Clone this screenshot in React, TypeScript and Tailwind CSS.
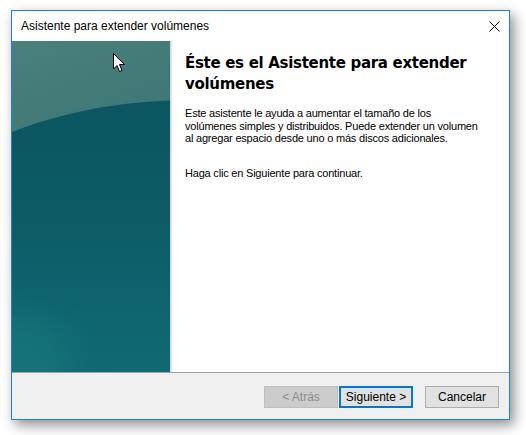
const ui = { fontFamily: '"Liberation Sans", Arial, sans-serif' };
const title = { fontFamily: '"DejaVu Sans", Verdana, sans-serif' };

function Cursor() {
  return (
    <svg
      className="absolute left-[101px] top-[12px]"
      width="13"
      height="20"
      viewBox="0 0 13 20"
    >
      <path
        d="M0.5 0.5 L0.5 16 L4 12.5 L6.5 18.5 L9 17.5 L6.5 11.5 L11.5 11.5 Z"
        fill="#fff"
        stroke="#000"
        strokeWidth="1"
        strokeLinejoin="miter"
      />
    </svg>
  );
}

function SidePanel() {
  return (
    <div className="relative w-[158px] shrink-0 overflow-hidden bg-[linear-gradient(160deg,#4a807d_0%,#3b7574_40%,#2c686e_75%,#286570_100%)]">
      {/* darker lower body, its top edge is a wide arc */}
      <div className="absolute -left-[120px] top-[59px] h-[320px] w-[600px] rounded-[50%] bg-[linear-gradient(180deg,#0b5660_0%,#0c5b65_35%,#0f6671_70%,#106b76_100%)]" />
      <div className="absolute -left-[50px] bottom-[-50px] h-[110px] w-[110px] rounded-full bg-[#1a7d7e] opacity-50 blur-[16px]" />
      <Cursor />
    </div>
  );
}

function Button({
  children,
  disabled,
  primary,
}: {
  children: React.ReactNode;
  disabled?: boolean;
  primary?: boolean;
}) {
  let cls = "border border-[#adadad] bg-[#e1e1e1] text-black";
  if (disabled) cls = "border border-[#bfbfbf] bg-[#cccccc] text-[#8d8d8d]";
  if (primary) cls = "border-2 border-[#0078d7] bg-[#e1e1e1] text-black";
  return (
    <div
      className={`flex h-[22px] w-[74px] items-center justify-center text-[12px] ${cls}`}
      style={ui}
    >
      {children}
    </div>
  );
}

export default function App() {
  return (
    <div className="h-[435px] w-[526px] overflow-hidden bg-white pl-[11px] pt-[10px]">
      <div className="flex h-[410px] w-[499px] flex-col border border-[#1883d7] bg-white shadow-[4px_5px_12px_rgba(0,0,0,0.45)]">
        <div className="flex h-[30px] shrink-0 items-center justify-between pl-[9px] pr-[9px]">
          <span className="text-[12px] text-black" style={ui}>
            Asistente para extender volúmenes
          </span>
          <svg width="11" height="11" viewBox="0 0 11 11">
            <path d="M0.5 0.5 L10.5 10.5 M10.5 0.5 L0.5 10.5" stroke="#000" strokeWidth="1" />
          </svg>
        </div>

        <div className="flex h-[331px] shrink-0">
          <SidePanel />
          <div className="flex-1 bg-white pl-[15px] pt-[12px] shadow-[inset_3px_0_3px_-2px_rgba(0,0,0,0.25)]">
            <h1
              className="text-[15px] font-bold leading-[21px] tracking-[-0.3px] text-black"
              style={title}
            >
              Éste es el Asistente para extender
              <br />
              volúmenes
            </h1>
            <p
              className="mt-[12px] whitespace-nowrap text-[11px] leading-[12.5px] tracking-[-0.2px] text-black"
              style={ui}
            >
              Este asistente le ayuda a aumentar el tamaño de los
              <br />
              volúmenes simples y distribuidos. Puede extender un volumen
              <br />
              al agregar espacio desde uno o más discos adicionales.
            </p>
            <p
              className="mt-[22px] text-[11px] leading-[12.5px] tracking-[-0.2px] text-black"
              style={ui}
            >
              Haga clic en Siguiente para continuar.
            </p>
          </div>
        </div>

        <div className="h-px shrink-0 bg-[#a0a0a0]" />

        <div className="flex flex-1 items-start justify-end bg-[#f0f0f0] pr-[10px] pt-[13px]">
          <Button disabled>&lt; Atrás</Button>
          <div className="ml-[1px]">
            <Button primary>Siguiente &gt;</Button>
          </div>
          <div className="ml-[12px]">
            <Button>Cancelar</Button>
          </div>
        </div>
      </div>
    </div>
  );
}
